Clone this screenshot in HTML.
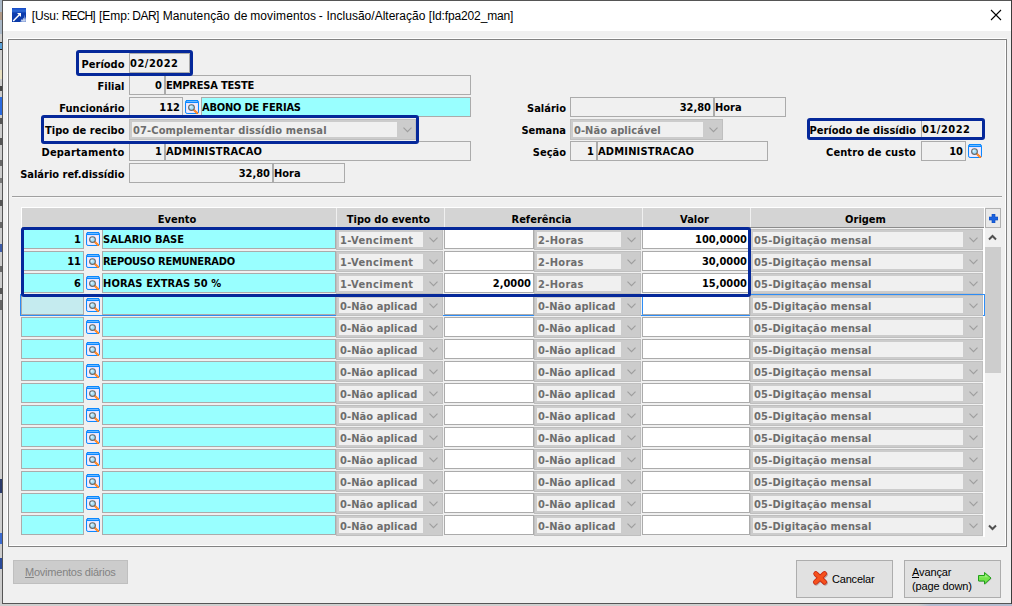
<!DOCTYPE html>
<html lang="pt-BR"><head><meta charset="utf-8"><title>Manutenção de movimentos</title>
<style>
*{box-sizing:border-box}
html,body{margin:0;padding:0}
body{width:1012px;height:606px;position:relative;overflow:hidden;background:#cdcdcd;font-family:'DejaVu Sans Condensed','Liberation Sans',sans-serif;font-size:11px;font-weight:bold;color:#000}
div,span{position:absolute;white-space:nowrap}
.win{left:2px;top:0;width:1010px;height:604px;background:#f0f0f0;border:1px solid #555}
.tb{left:3px;top:1px;width:1008px;height:30px;background:#fff}
.title{left:0;top:9px;font:normal 12px/15px 'Liberation Sans',sans-serif}
.pw{left:7px;top:38px;width:999px;height:508px;border:1px solid #fff}
.pg{left:8px;top:39px;width:999px;height:508px;border:1px solid #828282}
.l{left:0;width:124px;text-align:right;height:20px;line-height:20px;margin-top:2px}
.f{height:20px;border:1px solid #ababab;background:#f0f0f0;line-height:20px;padding:0 1px 0 0;overflow:hidden}
.r{text-align:right;padding-right:2px}
.cy{background:#99ffff}
.wh{background:#fff}
.cb{height:21px;background:#cccccc;border:1px solid #bfbfbf;color:#6d6d6d;line-height:21px}
.cb i{position:absolute;left:2px;top:2px;bottom:2px;right:19px;background:#f0f0f0}
.cb b{position:absolute;left:3px;top:0;font-weight:bold}
.cb svg{position:absolute;right:4px;top:6.8px}
.cb2 i{right:18px}.cb2 svg{right:3px}
.hl{border:3px solid #05289a;border-radius:3px}
.ic{width:14px;height:14px}
.hd{top:208px;height:19px;background:#d4d4d4;text-align:center;line-height:23px;overflow:hidden}
.btn{background:#e1e1e1;border:1px solid #adadad;font:normal 11px/14px 'Liberation Sans',sans-serif}
.act{background:#c5ebef}.actv{border-left-color:#2d8cf5}
</style></head>
<body>
<div class="win"></div><div class="tb"></div>
<div style="left:0;top:0;width:2px;height:34px;background:#a9b7c6"></div>
<div style="left:0;top:12px;width:2px;height:8px;background:#b09a88"></div>
<div style="left:0;top:42px;width:2px;height:1px;background:#222"></div>
<div style="left:0;top:43px;width:2px;height:6px;background:#5aa0d8"></div>
<div style="left:0;top:49px;width:2px;height:1px;background:#222"></div>
<div style="left:0;top:70px;width:2px;height:9px;background:#e8e0c0"></div>
<div style="left:0;top:86px;width:2px;height:5px;background:#444"></div>
<div style="left:0;top:97px;width:2px;height:18px;background:#2a6ae0"></div>
<div style="left:0;top:118px;width:2px;height:6px;background:#555"></div>
<div style="left:0;top:138px;width:2px;height:7px;background:#555"></div>
<div style="left:0;top:160px;width:2px;height:6px;background:#666"></div>
<div style="left:0;top:178px;width:2px;height:5px;background:#777"></div>
<div style="left:0;top:200px;width:2px;height:6px;background:#555"></div>
<div style="left:0;top:222px;width:2px;height:6px;background:#666"></div>
<div style="left:0;top:244px;width:2px;height:8px;background:#3a5aa8"></div>
<div style="left:0;top:266px;width:2px;height:6px;background:#666"></div>
<div style="left:0;top:288px;width:2px;height:6px;background:#555"></div>
<div style="left:0;top:300px;width:2px;height:10px;background:#666"></div>
<div style="left:0;top:479px;width:2px;height:14px;background:#2a3a6a"></div>
<div style="left:0;top:533px;width:2px;height:11px;background:#3a6ad0"></div>
<div style="left:0;top:558px;width:2px;height:11px;background:#2a4a9a"></div>
<div style="left:0;top:604px;width:1012px;height:2px;background:linear-gradient(90deg,#cfcfcf 0,#cfcfcf 918px,#b4bcd0 930px,#b4bcd0 100%)"></div>
<svg style="position:absolute;left:12px;top:8px" width="14" height="14" viewBox="0 0 14 14"><defs><linearGradient id="tg" x1="0" y1="0" x2="0" y2="1"><stop offset="0" stop-color="#1448c4"/><stop offset="0.22" stop-color="#2f6cd8"/><stop offset="0.36" stop-color="#0c3cae"/><stop offset="1" stop-color="#0a3aa8"/></linearGradient></defs><rect width="14" height="14" fill="url(#tg)"/><path d="M1.2 13 L7.4 6.8" stroke="#fff" stroke-width="1.5" fill="none"/><path d="M5 5 L9 5 L9 9 Z" fill="#fff"/><path d="M8.3 13.6 L9.6 11 L10.4 12 L11.2 9.6 L11.8 10.6 L12.8 6.6 L13.2 9.8 L14 9.4 L14 14 L8.6 14 Z" fill="#c4d6f4" opacity="0.55"/><path d="M9 12.6 l1-1.4 l0.8 1 l1.2-2.4 l0.6 1.8 l1-0.6 l0 2.6 l-3.6 0 z" fill="#fff" opacity="0.6"/></svg>
<div class="title"><span style="left:31.7px;letter-spacing:-0.125px">[Usu:</span> <span style="left:61.8px;letter-spacing:-0.9px">RECH]</span> <span style="left:98.9px;letter-spacing:-0.025px">[Emp:</span> <span style="left:132.3px;letter-spacing:-0.533px">DAR]</span> <span style="left:162.7px;letter-spacing:0.111px">Manutenção</span> <span style="left:233.9px;letter-spacing:0.1px">de</span> <span style="left:250.2px;letter-spacing:0.133px">movimentos</span> <span style="left:318.7px;letter-spacing:0px">-</span> <span style="left:326.5px;letter-spacing:0.012px">Inclusão/Alteração</span> <span style="left:428.7px;letter-spacing:-0.143px">[Id:fpa202_man]</span></div>
<svg style="position:absolute;left:990px;top:9px" width="12" height="12" viewBox="0 0 12 12"><path d="M1 1 L11 11 M11 1 L1 11" stroke="#000" stroke-width="1.1" fill="none"/></svg>
<div class="pw"></div><div class="pg"></div>
<div class="l" style="top:53px;width:124.5px">Período</div>
<div class="f " style="left:129px;top:53px;width:61px"><span style="position:static;letter-spacing:0.5px">02/2022</span></div>
<div class="l" style="top:75px;width:124.5px">Filial</div>
<div class="f r" style="left:129px;top:75px;width:36px">0</div>
<div class="f " style="left:165px;top:75px;width:306px"><span style="position:static;letter-spacing:-0.2px">EMPRESA TESTE</span></div>
<div class="l" style="top:97px;width:124.5px">Funcionário</div>
<div class="f r" style="left:129px;top:97px;width:54px">112</div>
<svg class="ic" style="position:absolute;left:185px;top:100px" width="14" height="14" viewBox="0 0 14 14"><rect x="0.5" y="0.5" width="13" height="13" rx="1.6" fill="#e9e3fd" stroke="#0a88ff"/><rect x="1" y="0" width="12" height="3" fill="#0a88ff"/><rect x="1.6" y="1" width="10.8" height="1" fill="#6cb8ff"/><rect x="2" y="4" width="10" height="8" fill="#f1edff"/><line x1="9.2" y1="10.2" x2="12.1" y2="13" stroke="#ff7a1c" stroke-width="2.1" stroke-linecap="round"/><line x1="9.6" y1="10.6" x2="12.1" y2="13" stroke="#ffd23c" stroke-width="1" stroke-dasharray="0.9 0.9"/><circle cx="6.5" cy="7.55" r="2.85" fill="#a6e0fa" stroke="#686868" stroke-width="1.15"/><circle cx="5.7" cy="6.8" r="1.1" fill="#e4f6ff" opacity="0.8"/></svg>
<div class="f cy" style="left:201px;top:97px;width:270px"><span style="position:static;letter-spacing:-0.2px">ABONO DE FERIAS</span></div>
<div class="l" style="top:119px;width:124.5px">Tipo de recibo</div>
<div class="cb cb2" style="left:129px;top:119px;width:287px"><i></i><b style="letter-spacing:0.13px">07-Complementar dissídio mensal</b><svg width="9" height="6" viewBox="0 0 9 6"><path d="M0.5 0.7 L4.5 4.7 L8.5 0.7" fill="none" stroke="#9e9e9e" stroke-width="1.15"/></svg></div>
<div class="l" style="top:141px;width:124.5px"><span style="position:static;letter-spacing:0.2px">Departamento</span></div>
<div class="f r" style="left:129px;top:141px;width:36px">1</div>
<div class="f " style="left:165px;top:141px;width:306px"><span style="position:static;letter-spacing:0.18px">ADMINISTRACAO</span></div>
<div class="l" style="top:163px;width:124.5px">Salário ref.dissídio</div>
<div class="f r" style="left:129px;top:163px;width:144px">32,80</div>
<div class="f " style="left:273px;top:163px;width:72px">Hora</div>
<div class="l" style="top:97px;width:566px">Salário</div>
<div class="f r" style="left:570px;top:97px;width:144px">32,80</div>
<div class="f " style="left:714px;top:97px;width:72px">Hora</div>
<div class="l" style="top:119px;width:566px">Semana</div>
<div class="cb " style="left:570px;top:119px;width:153px"><i></i><b style="letter-spacing:0.05px">0-Não aplicável</b><svg width="9" height="6" viewBox="0 0 9 6"><path d="M0.5 0.7 L4.5 4.7 L8.5 0.7" fill="none" stroke="#9e9e9e" stroke-width="1.15"/></svg></div>
<div class="l" style="top:141px;width:566px">Seção</div>
<div class="f r" style="left:570px;top:141px;width:27px">1</div>
<div class="f " style="left:597px;top:141px;width:171px"><span style="position:static;letter-spacing:0.18px">ADMINISTRACAO</span></div>
<div class="l" style="top:119px;width:916px">Período de dissídio</div>
<div class="f " style="left:921px;top:119px;width:63px"><span style="position:static;letter-spacing:0.5px">01/2022</span></div>
<div class="l" style="top:141px;width:916px"><span style="position:static;letter-spacing:0.1px">Centro de custo</span></div>
<div class="f r" style="left:921px;top:141px;width:45px">10</div>
<svg class="ic" style="position:absolute;left:968px;top:144px" width="14" height="14" viewBox="0 0 14 14"><rect x="0.5" y="0.5" width="13" height="13" rx="1.6" fill="#e9e3fd" stroke="#0a88ff"/><rect x="1" y="0" width="12" height="3" fill="#0a88ff"/><rect x="1.6" y="1" width="10.8" height="1" fill="#6cb8ff"/><rect x="2" y="4" width="10" height="8" fill="#f1edff"/><line x1="9.2" y1="10.2" x2="12.1" y2="13" stroke="#ff7a1c" stroke-width="2.1" stroke-linecap="round"/><line x1="9.6" y1="10.6" x2="12.1" y2="13" stroke="#ffd23c" stroke-width="1" stroke-dasharray="0.9 0.9"/><circle cx="6.5" cy="7.55" r="2.85" fill="#a6e0fa" stroke="#686868" stroke-width="1.15"/><circle cx="5.7" cy="6.8" r="1.1" fill="#e4f6ff" opacity="0.8"/></svg>
<div class="hl" style="left:76px;top:50px;width:117px;height:26px"></div>
<div class="hl" style="left:41px;top:115px;width:378px;height:29px"></div>
<div class="hl" style="left:807px;top:118px;width:178px;height:22px"></div>
<div style="left:12px;top:196px;width:990px;height:1px;background:#a0a0a0"></div>
<div style="left:12px;top:197px;width:990px;height:1px;background:#f8f8f8"></div>
<div style="left:21px;top:207px;width:964px;height:330px;background:#f0f0f0;border-top:1px solid #fff"></div>
<div style="left:983px;top:207px;width:2px;height:330px;background:#fff"></div>
<div style="left:21px;top:207px;width:1px;height:21px;background:#fff"></div>
<div style="left:22px;top:227px;width:962px;height:1px;background:#8c8c8c"></div>
<div class="hd" style="left:22px;width:314px"><span style="position:relative;left:-2px">Evento</span></div>
<div class="hd" style="left:337px;width:107px"><span style="position:relative;left:-2px">Tipo do evento</span></div>
<div class="hd" style="left:445px;width:197px"><span style="position:relative;left:-2px">Referência</span></div>
<div class="hd" style="left:643px;width:107px"><span style="position:relative;left:-2px">Valor</span></div>
<div class="hd" style="left:751px;width:233px"><span style="position:relative;left:-2px">Origem</span></div>
<div style="left:985px;top:208px;width:16px;height:20px;background:#e9e9e9;border:1px solid #b2b2b2"></div>
<svg style="position:absolute;left:989px;top:214px" width="9" height="9" viewBox="0 0 9 9"><path d="M3 0h3v3h3v3h-3v3h-3v-3h-3v-3h3z" fill="#1b63e0" stroke="#0a48b8" stroke-width="0.6"/></svg>
<div style="left:985px;top:247px;width:16px;height:126px;background:#cdcdcd"></div>
<svg style="position:absolute;left:988px;top:234px" width="9" height="7" viewBox="0 0 9 7"><path d="M1 5.5 L4.5 2 L8 5.5" fill="none" stroke="#505050" stroke-width="2"/></svg>
<svg style="position:absolute;left:988px;top:524px" width="9" height="7" viewBox="0 0 9 7"><path d="M1 1.5 L4.5 5 L8 1.5" fill="none" stroke="#505050" stroke-width="2"/></svg>
<div class="f cy r" style="left:21px;top:229px;width:63px">1</div>
<svg class="ic" style="position:absolute;left:86px;top:232px" width="14" height="14" viewBox="0 0 14 14"><rect x="0.5" y="0.5" width="13" height="13" rx="1.6" fill="#e9e3fd" stroke="#0a88ff"/><rect x="1" y="0" width="12" height="3" fill="#0a88ff"/><rect x="1.6" y="1" width="10.8" height="1" fill="#6cb8ff"/><rect x="2" y="4" width="10" height="8" fill="#f1edff"/><line x1="9.2" y1="10.2" x2="12.1" y2="13" stroke="#ff7a1c" stroke-width="2.1" stroke-linecap="round"/><line x1="9.6" y1="10.6" x2="12.1" y2="13" stroke="#ffd23c" stroke-width="1" stroke-dasharray="0.9 0.9"/><circle cx="6.5" cy="7.55" r="2.85" fill="#a6e0fa" stroke="#686868" stroke-width="1.15"/><circle cx="5.7" cy="6.8" r="1.1" fill="#e4f6ff" opacity="0.8"/></svg>
<div class="f cy" style="left:102px;top:229px;width:234px">SALARIO BASE</div>
<div class="cb " style="left:336px;top:229px;width:107px"><i></i><b style="letter-spacing:0.4px">1-Venciment</b><svg width="9" height="6" viewBox="0 0 9 6"><path d="M0.5 0.7 L4.5 4.7 L8.5 0.7" fill="none" stroke="#9e9e9e" stroke-width="1.15"/></svg></div>
<div class="f wh r" style="left:444px;top:229px;width:90px"></div>
<div class="cb " style="left:534px;top:229px;width:107px"><i></i><b style="letter-spacing:0.33px">2-Horas</b><svg width="9" height="6" viewBox="0 0 9 6"><path d="M0.5 0.7 L4.5 4.7 L8.5 0.7" fill="none" stroke="#9e9e9e" stroke-width="1.15"/></svg></div>
<div class="f wh r" style="left:642px;top:229px;width:108px">100,0000</div>
<div class="cb " style="left:750px;top:229px;width:233px"><i></i><b style="letter-spacing:0.18px">05-Digitação mensal</b><svg width="9" height="6" viewBox="0 0 9 6"><path d="M0.5 0.7 L4.5 4.7 L8.5 0.7" fill="none" stroke="#9e9e9e" stroke-width="1.15"/></svg></div>
<div class="f cy r" style="left:21px;top:251px;width:63px">11</div>
<svg class="ic" style="position:absolute;left:86px;top:254px" width="14" height="14" viewBox="0 0 14 14"><rect x="0.5" y="0.5" width="13" height="13" rx="1.6" fill="#e9e3fd" stroke="#0a88ff"/><rect x="1" y="0" width="12" height="3" fill="#0a88ff"/><rect x="1.6" y="1" width="10.8" height="1" fill="#6cb8ff"/><rect x="2" y="4" width="10" height="8" fill="#f1edff"/><line x1="9.2" y1="10.2" x2="12.1" y2="13" stroke="#ff7a1c" stroke-width="2.1" stroke-linecap="round"/><line x1="9.6" y1="10.6" x2="12.1" y2="13" stroke="#ffd23c" stroke-width="1" stroke-dasharray="0.9 0.9"/><circle cx="6.5" cy="7.55" r="2.85" fill="#a6e0fa" stroke="#686868" stroke-width="1.15"/><circle cx="5.7" cy="6.8" r="1.1" fill="#e4f6ff" opacity="0.8"/></svg>
<div class="f cy" style="left:102px;top:251px;width:234px"><span style="position:static;letter-spacing:-0.25px">REPOUSO REMUNERADO</span></div>
<div class="cb " style="left:336px;top:251px;width:107px"><i></i><b style="letter-spacing:0.4px">1-Venciment</b><svg width="9" height="6" viewBox="0 0 9 6"><path d="M0.5 0.7 L4.5 4.7 L8.5 0.7" fill="none" stroke="#9e9e9e" stroke-width="1.15"/></svg></div>
<div class="f wh r" style="left:444px;top:251px;width:90px"></div>
<div class="cb " style="left:534px;top:251px;width:107px"><i></i><b style="letter-spacing:0.33px">2-Horas</b><svg width="9" height="6" viewBox="0 0 9 6"><path d="M0.5 0.7 L4.5 4.7 L8.5 0.7" fill="none" stroke="#9e9e9e" stroke-width="1.15"/></svg></div>
<div class="f wh r" style="left:642px;top:251px;width:108px">30,0000</div>
<div class="cb " style="left:750px;top:251px;width:233px"><i></i><b style="letter-spacing:0.18px">05-Digitação mensal</b><svg width="9" height="6" viewBox="0 0 9 6"><path d="M0.5 0.7 L4.5 4.7 L8.5 0.7" fill="none" stroke="#9e9e9e" stroke-width="1.15"/></svg></div>
<div class="f cy r" style="left:21px;top:273px;width:63px">6</div>
<svg class="ic" style="position:absolute;left:86px;top:276px" width="14" height="14" viewBox="0 0 14 14"><rect x="0.5" y="0.5" width="13" height="13" rx="1.6" fill="#e9e3fd" stroke="#0a88ff"/><rect x="1" y="0" width="12" height="3" fill="#0a88ff"/><rect x="1.6" y="1" width="10.8" height="1" fill="#6cb8ff"/><rect x="2" y="4" width="10" height="8" fill="#f1edff"/><line x1="9.2" y1="10.2" x2="12.1" y2="13" stroke="#ff7a1c" stroke-width="2.1" stroke-linecap="round"/><line x1="9.6" y1="10.6" x2="12.1" y2="13" stroke="#ffd23c" stroke-width="1" stroke-dasharray="0.9 0.9"/><circle cx="6.5" cy="7.55" r="2.85" fill="#a6e0fa" stroke="#686868" stroke-width="1.15"/><circle cx="5.7" cy="6.8" r="1.1" fill="#e4f6ff" opacity="0.8"/></svg>
<div class="f cy" style="left:102px;top:273px;width:234px"><span style="position:static;letter-spacing:0.1px">HORAS EXTRAS 50 %</span></div>
<div class="cb " style="left:336px;top:273px;width:107px"><i></i><b style="letter-spacing:0.4px">1-Venciment</b><svg width="9" height="6" viewBox="0 0 9 6"><path d="M0.5 0.7 L4.5 4.7 L8.5 0.7" fill="none" stroke="#9e9e9e" stroke-width="1.15"/></svg></div>
<div class="f wh r" style="left:444px;top:273px;width:90px">2,0000</div>
<div class="cb " style="left:534px;top:273px;width:107px"><i></i><b style="letter-spacing:0.33px">2-Horas</b><svg width="9" height="6" viewBox="0 0 9 6"><path d="M0.5 0.7 L4.5 4.7 L8.5 0.7" fill="none" stroke="#9e9e9e" stroke-width="1.15"/></svg></div>
<div class="f wh r" style="left:642px;top:273px;width:108px">15,0000</div>
<div class="cb " style="left:750px;top:273px;width:233px"><i></i><b style="letter-spacing:0.18px">05-Digitação mensal</b><svg width="9" height="6" viewBox="0 0 9 6"><path d="M0.5 0.7 L4.5 4.7 L8.5 0.7" fill="none" stroke="#9e9e9e" stroke-width="1.15"/></svg></div>
<div style="left:20px;top:294px;width:965px;height:22px;border:1px solid #2d8cf5"></div>
<div class="f cy r act" style="left:21px;top:295px;width:63px"></div>
<svg class="ic" style="position:absolute;left:86px;top:298px" width="14" height="14" viewBox="0 0 14 14"><rect x="0.5" y="0.5" width="13" height="13" rx="1.6" fill="#e9e3fd" stroke="#0a88ff"/><rect x="1" y="0" width="12" height="3" fill="#0a88ff"/><rect x="1.6" y="1" width="10.8" height="1" fill="#6cb8ff"/><rect x="2" y="4" width="10" height="8" fill="#f1edff"/><line x1="9.2" y1="10.2" x2="12.1" y2="13" stroke="#ff7a1c" stroke-width="2.1" stroke-linecap="round"/><line x1="9.6" y1="10.6" x2="12.1" y2="13" stroke="#ffd23c" stroke-width="1" stroke-dasharray="0.9 0.9"/><circle cx="6.5" cy="7.55" r="2.85" fill="#a6e0fa" stroke="#686868" stroke-width="1.15"/><circle cx="5.7" cy="6.8" r="1.1" fill="#e4f6ff" opacity="0.8"/></svg>
<div class="f cy" style="left:102px;top:295px;width:234px"></div>
<div class="cb " style="left:336px;top:295px;width:107px"><i></i><b style="letter-spacing:0.08px">0-Não aplicad</b><svg width="9" height="6" viewBox="0 0 9 6"><path d="M0.5 0.7 L4.5 4.7 L8.5 0.7" fill="none" stroke="#9e9e9e" stroke-width="1.15"/></svg></div>
<div class="f wh r" style="left:444px;top:295px;width:90px"></div>
<div class="cb " style="left:534px;top:295px;width:107px"><i></i><b style="letter-spacing:0.08px">0-Não aplicad</b><svg width="9" height="6" viewBox="0 0 9 6"><path d="M0.5 0.7 L4.5 4.7 L8.5 0.7" fill="none" stroke="#9e9e9e" stroke-width="1.15"/></svg></div>
<div class="f wh r actv" style="left:642px;top:295px;width:108px"></div>
<div class="cb " style="left:750px;top:295px;width:233px"><i></i><b style="letter-spacing:0.18px">05-Digitação mensal</b><svg width="9" height="6" viewBox="0 0 9 6"><path d="M0.5 0.7 L4.5 4.7 L8.5 0.7" fill="none" stroke="#9e9e9e" stroke-width="1.15"/></svg></div>
<div class="f cy r" style="left:21px;top:317px;width:63px"></div>
<svg class="ic" style="position:absolute;left:86px;top:320px" width="14" height="14" viewBox="0 0 14 14"><rect x="0.5" y="0.5" width="13" height="13" rx="1.6" fill="#e9e3fd" stroke="#0a88ff"/><rect x="1" y="0" width="12" height="3" fill="#0a88ff"/><rect x="1.6" y="1" width="10.8" height="1" fill="#6cb8ff"/><rect x="2" y="4" width="10" height="8" fill="#f1edff"/><line x1="9.2" y1="10.2" x2="12.1" y2="13" stroke="#ff7a1c" stroke-width="2.1" stroke-linecap="round"/><line x1="9.6" y1="10.6" x2="12.1" y2="13" stroke="#ffd23c" stroke-width="1" stroke-dasharray="0.9 0.9"/><circle cx="6.5" cy="7.55" r="2.85" fill="#a6e0fa" stroke="#686868" stroke-width="1.15"/><circle cx="5.7" cy="6.8" r="1.1" fill="#e4f6ff" opacity="0.8"/></svg>
<div class="f cy" style="left:102px;top:317px;width:234px"></div>
<div class="cb " style="left:336px;top:317px;width:107px"><i></i><b style="letter-spacing:0.08px">0-Não aplicad</b><svg width="9" height="6" viewBox="0 0 9 6"><path d="M0.5 0.7 L4.5 4.7 L8.5 0.7" fill="none" stroke="#9e9e9e" stroke-width="1.15"/></svg></div>
<div class="f wh r" style="left:444px;top:317px;width:90px"></div>
<div class="cb " style="left:534px;top:317px;width:107px"><i></i><b style="letter-spacing:0.08px">0-Não aplicad</b><svg width="9" height="6" viewBox="0 0 9 6"><path d="M0.5 0.7 L4.5 4.7 L8.5 0.7" fill="none" stroke="#9e9e9e" stroke-width="1.15"/></svg></div>
<div class="f wh r" style="left:642px;top:317px;width:108px"></div>
<div class="cb " style="left:750px;top:317px;width:233px"><i></i><b style="letter-spacing:0.18px">05-Digitação mensal</b><svg width="9" height="6" viewBox="0 0 9 6"><path d="M0.5 0.7 L4.5 4.7 L8.5 0.7" fill="none" stroke="#9e9e9e" stroke-width="1.15"/></svg></div>
<div class="f cy r" style="left:21px;top:339px;width:63px"></div>
<svg class="ic" style="position:absolute;left:86px;top:342px" width="14" height="14" viewBox="0 0 14 14"><rect x="0.5" y="0.5" width="13" height="13" rx="1.6" fill="#e9e3fd" stroke="#0a88ff"/><rect x="1" y="0" width="12" height="3" fill="#0a88ff"/><rect x="1.6" y="1" width="10.8" height="1" fill="#6cb8ff"/><rect x="2" y="4" width="10" height="8" fill="#f1edff"/><line x1="9.2" y1="10.2" x2="12.1" y2="13" stroke="#ff7a1c" stroke-width="2.1" stroke-linecap="round"/><line x1="9.6" y1="10.6" x2="12.1" y2="13" stroke="#ffd23c" stroke-width="1" stroke-dasharray="0.9 0.9"/><circle cx="6.5" cy="7.55" r="2.85" fill="#a6e0fa" stroke="#686868" stroke-width="1.15"/><circle cx="5.7" cy="6.8" r="1.1" fill="#e4f6ff" opacity="0.8"/></svg>
<div class="f cy" style="left:102px;top:339px;width:234px"></div>
<div class="cb " style="left:336px;top:339px;width:107px"><i></i><b style="letter-spacing:0.08px">0-Não aplicad</b><svg width="9" height="6" viewBox="0 0 9 6"><path d="M0.5 0.7 L4.5 4.7 L8.5 0.7" fill="none" stroke="#9e9e9e" stroke-width="1.15"/></svg></div>
<div class="f wh r" style="left:444px;top:339px;width:90px"></div>
<div class="cb " style="left:534px;top:339px;width:107px"><i></i><b style="letter-spacing:0.08px">0-Não aplicad</b><svg width="9" height="6" viewBox="0 0 9 6"><path d="M0.5 0.7 L4.5 4.7 L8.5 0.7" fill="none" stroke="#9e9e9e" stroke-width="1.15"/></svg></div>
<div class="f wh r" style="left:642px;top:339px;width:108px"></div>
<div class="cb " style="left:750px;top:339px;width:233px"><i></i><b style="letter-spacing:0.18px">05-Digitação mensal</b><svg width="9" height="6" viewBox="0 0 9 6"><path d="M0.5 0.7 L4.5 4.7 L8.5 0.7" fill="none" stroke="#9e9e9e" stroke-width="1.15"/></svg></div>
<div class="f cy r" style="left:21px;top:361px;width:63px"></div>
<svg class="ic" style="position:absolute;left:86px;top:364px" width="14" height="14" viewBox="0 0 14 14"><rect x="0.5" y="0.5" width="13" height="13" rx="1.6" fill="#e9e3fd" stroke="#0a88ff"/><rect x="1" y="0" width="12" height="3" fill="#0a88ff"/><rect x="1.6" y="1" width="10.8" height="1" fill="#6cb8ff"/><rect x="2" y="4" width="10" height="8" fill="#f1edff"/><line x1="9.2" y1="10.2" x2="12.1" y2="13" stroke="#ff7a1c" stroke-width="2.1" stroke-linecap="round"/><line x1="9.6" y1="10.6" x2="12.1" y2="13" stroke="#ffd23c" stroke-width="1" stroke-dasharray="0.9 0.9"/><circle cx="6.5" cy="7.55" r="2.85" fill="#a6e0fa" stroke="#686868" stroke-width="1.15"/><circle cx="5.7" cy="6.8" r="1.1" fill="#e4f6ff" opacity="0.8"/></svg>
<div class="f cy" style="left:102px;top:361px;width:234px"></div>
<div class="cb " style="left:336px;top:361px;width:107px"><i></i><b style="letter-spacing:0.08px">0-Não aplicad</b><svg width="9" height="6" viewBox="0 0 9 6"><path d="M0.5 0.7 L4.5 4.7 L8.5 0.7" fill="none" stroke="#9e9e9e" stroke-width="1.15"/></svg></div>
<div class="f wh r" style="left:444px;top:361px;width:90px"></div>
<div class="cb " style="left:534px;top:361px;width:107px"><i></i><b style="letter-spacing:0.08px">0-Não aplicad</b><svg width="9" height="6" viewBox="0 0 9 6"><path d="M0.5 0.7 L4.5 4.7 L8.5 0.7" fill="none" stroke="#9e9e9e" stroke-width="1.15"/></svg></div>
<div class="f wh r" style="left:642px;top:361px;width:108px"></div>
<div class="cb " style="left:750px;top:361px;width:233px"><i></i><b style="letter-spacing:0.18px">05-Digitação mensal</b><svg width="9" height="6" viewBox="0 0 9 6"><path d="M0.5 0.7 L4.5 4.7 L8.5 0.7" fill="none" stroke="#9e9e9e" stroke-width="1.15"/></svg></div>
<div class="f cy r" style="left:21px;top:383px;width:63px"></div>
<svg class="ic" style="position:absolute;left:86px;top:386px" width="14" height="14" viewBox="0 0 14 14"><rect x="0.5" y="0.5" width="13" height="13" rx="1.6" fill="#e9e3fd" stroke="#0a88ff"/><rect x="1" y="0" width="12" height="3" fill="#0a88ff"/><rect x="1.6" y="1" width="10.8" height="1" fill="#6cb8ff"/><rect x="2" y="4" width="10" height="8" fill="#f1edff"/><line x1="9.2" y1="10.2" x2="12.1" y2="13" stroke="#ff7a1c" stroke-width="2.1" stroke-linecap="round"/><line x1="9.6" y1="10.6" x2="12.1" y2="13" stroke="#ffd23c" stroke-width="1" stroke-dasharray="0.9 0.9"/><circle cx="6.5" cy="7.55" r="2.85" fill="#a6e0fa" stroke="#686868" stroke-width="1.15"/><circle cx="5.7" cy="6.8" r="1.1" fill="#e4f6ff" opacity="0.8"/></svg>
<div class="f cy" style="left:102px;top:383px;width:234px"></div>
<div class="cb " style="left:336px;top:383px;width:107px"><i></i><b style="letter-spacing:0.08px">0-Não aplicad</b><svg width="9" height="6" viewBox="0 0 9 6"><path d="M0.5 0.7 L4.5 4.7 L8.5 0.7" fill="none" stroke="#9e9e9e" stroke-width="1.15"/></svg></div>
<div class="f wh r" style="left:444px;top:383px;width:90px"></div>
<div class="cb " style="left:534px;top:383px;width:107px"><i></i><b style="letter-spacing:0.08px">0-Não aplicad</b><svg width="9" height="6" viewBox="0 0 9 6"><path d="M0.5 0.7 L4.5 4.7 L8.5 0.7" fill="none" stroke="#9e9e9e" stroke-width="1.15"/></svg></div>
<div class="f wh r" style="left:642px;top:383px;width:108px"></div>
<div class="cb " style="left:750px;top:383px;width:233px"><i></i><b style="letter-spacing:0.18px">05-Digitação mensal</b><svg width="9" height="6" viewBox="0 0 9 6"><path d="M0.5 0.7 L4.5 4.7 L8.5 0.7" fill="none" stroke="#9e9e9e" stroke-width="1.15"/></svg></div>
<div class="f cy r" style="left:21px;top:405px;width:63px"></div>
<svg class="ic" style="position:absolute;left:86px;top:408px" width="14" height="14" viewBox="0 0 14 14"><rect x="0.5" y="0.5" width="13" height="13" rx="1.6" fill="#e9e3fd" stroke="#0a88ff"/><rect x="1" y="0" width="12" height="3" fill="#0a88ff"/><rect x="1.6" y="1" width="10.8" height="1" fill="#6cb8ff"/><rect x="2" y="4" width="10" height="8" fill="#f1edff"/><line x1="9.2" y1="10.2" x2="12.1" y2="13" stroke="#ff7a1c" stroke-width="2.1" stroke-linecap="round"/><line x1="9.6" y1="10.6" x2="12.1" y2="13" stroke="#ffd23c" stroke-width="1" stroke-dasharray="0.9 0.9"/><circle cx="6.5" cy="7.55" r="2.85" fill="#a6e0fa" stroke="#686868" stroke-width="1.15"/><circle cx="5.7" cy="6.8" r="1.1" fill="#e4f6ff" opacity="0.8"/></svg>
<div class="f cy" style="left:102px;top:405px;width:234px"></div>
<div class="cb " style="left:336px;top:405px;width:107px"><i></i><b style="letter-spacing:0.08px">0-Não aplicad</b><svg width="9" height="6" viewBox="0 0 9 6"><path d="M0.5 0.7 L4.5 4.7 L8.5 0.7" fill="none" stroke="#9e9e9e" stroke-width="1.15"/></svg></div>
<div class="f wh r" style="left:444px;top:405px;width:90px"></div>
<div class="cb " style="left:534px;top:405px;width:107px"><i></i><b style="letter-spacing:0.08px">0-Não aplicad</b><svg width="9" height="6" viewBox="0 0 9 6"><path d="M0.5 0.7 L4.5 4.7 L8.5 0.7" fill="none" stroke="#9e9e9e" stroke-width="1.15"/></svg></div>
<div class="f wh r" style="left:642px;top:405px;width:108px"></div>
<div class="cb " style="left:750px;top:405px;width:233px"><i></i><b style="letter-spacing:0.18px">05-Digitação mensal</b><svg width="9" height="6" viewBox="0 0 9 6"><path d="M0.5 0.7 L4.5 4.7 L8.5 0.7" fill="none" stroke="#9e9e9e" stroke-width="1.15"/></svg></div>
<div class="f cy r" style="left:21px;top:427px;width:63px"></div>
<svg class="ic" style="position:absolute;left:86px;top:430px" width="14" height="14" viewBox="0 0 14 14"><rect x="0.5" y="0.5" width="13" height="13" rx="1.6" fill="#e9e3fd" stroke="#0a88ff"/><rect x="1" y="0" width="12" height="3" fill="#0a88ff"/><rect x="1.6" y="1" width="10.8" height="1" fill="#6cb8ff"/><rect x="2" y="4" width="10" height="8" fill="#f1edff"/><line x1="9.2" y1="10.2" x2="12.1" y2="13" stroke="#ff7a1c" stroke-width="2.1" stroke-linecap="round"/><line x1="9.6" y1="10.6" x2="12.1" y2="13" stroke="#ffd23c" stroke-width="1" stroke-dasharray="0.9 0.9"/><circle cx="6.5" cy="7.55" r="2.85" fill="#a6e0fa" stroke="#686868" stroke-width="1.15"/><circle cx="5.7" cy="6.8" r="1.1" fill="#e4f6ff" opacity="0.8"/></svg>
<div class="f cy" style="left:102px;top:427px;width:234px"></div>
<div class="cb " style="left:336px;top:427px;width:107px"><i></i><b style="letter-spacing:0.08px">0-Não aplicad</b><svg width="9" height="6" viewBox="0 0 9 6"><path d="M0.5 0.7 L4.5 4.7 L8.5 0.7" fill="none" stroke="#9e9e9e" stroke-width="1.15"/></svg></div>
<div class="f wh r" style="left:444px;top:427px;width:90px"></div>
<div class="cb " style="left:534px;top:427px;width:107px"><i></i><b style="letter-spacing:0.08px">0-Não aplicad</b><svg width="9" height="6" viewBox="0 0 9 6"><path d="M0.5 0.7 L4.5 4.7 L8.5 0.7" fill="none" stroke="#9e9e9e" stroke-width="1.15"/></svg></div>
<div class="f wh r" style="left:642px;top:427px;width:108px"></div>
<div class="cb " style="left:750px;top:427px;width:233px"><i></i><b style="letter-spacing:0.18px">05-Digitação mensal</b><svg width="9" height="6" viewBox="0 0 9 6"><path d="M0.5 0.7 L4.5 4.7 L8.5 0.7" fill="none" stroke="#9e9e9e" stroke-width="1.15"/></svg></div>
<div class="f cy r" style="left:21px;top:449px;width:63px"></div>
<svg class="ic" style="position:absolute;left:86px;top:452px" width="14" height="14" viewBox="0 0 14 14"><rect x="0.5" y="0.5" width="13" height="13" rx="1.6" fill="#e9e3fd" stroke="#0a88ff"/><rect x="1" y="0" width="12" height="3" fill="#0a88ff"/><rect x="1.6" y="1" width="10.8" height="1" fill="#6cb8ff"/><rect x="2" y="4" width="10" height="8" fill="#f1edff"/><line x1="9.2" y1="10.2" x2="12.1" y2="13" stroke="#ff7a1c" stroke-width="2.1" stroke-linecap="round"/><line x1="9.6" y1="10.6" x2="12.1" y2="13" stroke="#ffd23c" stroke-width="1" stroke-dasharray="0.9 0.9"/><circle cx="6.5" cy="7.55" r="2.85" fill="#a6e0fa" stroke="#686868" stroke-width="1.15"/><circle cx="5.7" cy="6.8" r="1.1" fill="#e4f6ff" opacity="0.8"/></svg>
<div class="f cy" style="left:102px;top:449px;width:234px"></div>
<div class="cb " style="left:336px;top:449px;width:107px"><i></i><b style="letter-spacing:0.08px">0-Não aplicad</b><svg width="9" height="6" viewBox="0 0 9 6"><path d="M0.5 0.7 L4.5 4.7 L8.5 0.7" fill="none" stroke="#9e9e9e" stroke-width="1.15"/></svg></div>
<div class="f wh r" style="left:444px;top:449px;width:90px"></div>
<div class="cb " style="left:534px;top:449px;width:107px"><i></i><b style="letter-spacing:0.08px">0-Não aplicad</b><svg width="9" height="6" viewBox="0 0 9 6"><path d="M0.5 0.7 L4.5 4.7 L8.5 0.7" fill="none" stroke="#9e9e9e" stroke-width="1.15"/></svg></div>
<div class="f wh r" style="left:642px;top:449px;width:108px"></div>
<div class="cb " style="left:750px;top:449px;width:233px"><i></i><b style="letter-spacing:0.18px">05-Digitação mensal</b><svg width="9" height="6" viewBox="0 0 9 6"><path d="M0.5 0.7 L4.5 4.7 L8.5 0.7" fill="none" stroke="#9e9e9e" stroke-width="1.15"/></svg></div>
<div class="f cy r" style="left:21px;top:471px;width:63px"></div>
<svg class="ic" style="position:absolute;left:86px;top:474px" width="14" height="14" viewBox="0 0 14 14"><rect x="0.5" y="0.5" width="13" height="13" rx="1.6" fill="#e9e3fd" stroke="#0a88ff"/><rect x="1" y="0" width="12" height="3" fill="#0a88ff"/><rect x="1.6" y="1" width="10.8" height="1" fill="#6cb8ff"/><rect x="2" y="4" width="10" height="8" fill="#f1edff"/><line x1="9.2" y1="10.2" x2="12.1" y2="13" stroke="#ff7a1c" stroke-width="2.1" stroke-linecap="round"/><line x1="9.6" y1="10.6" x2="12.1" y2="13" stroke="#ffd23c" stroke-width="1" stroke-dasharray="0.9 0.9"/><circle cx="6.5" cy="7.55" r="2.85" fill="#a6e0fa" stroke="#686868" stroke-width="1.15"/><circle cx="5.7" cy="6.8" r="1.1" fill="#e4f6ff" opacity="0.8"/></svg>
<div class="f cy" style="left:102px;top:471px;width:234px"></div>
<div class="cb " style="left:336px;top:471px;width:107px"><i></i><b style="letter-spacing:0.08px">0-Não aplicad</b><svg width="9" height="6" viewBox="0 0 9 6"><path d="M0.5 0.7 L4.5 4.7 L8.5 0.7" fill="none" stroke="#9e9e9e" stroke-width="1.15"/></svg></div>
<div class="f wh r" style="left:444px;top:471px;width:90px"></div>
<div class="cb " style="left:534px;top:471px;width:107px"><i></i><b style="letter-spacing:0.08px">0-Não aplicad</b><svg width="9" height="6" viewBox="0 0 9 6"><path d="M0.5 0.7 L4.5 4.7 L8.5 0.7" fill="none" stroke="#9e9e9e" stroke-width="1.15"/></svg></div>
<div class="f wh r" style="left:642px;top:471px;width:108px"></div>
<div class="cb " style="left:750px;top:471px;width:233px"><i></i><b style="letter-spacing:0.18px">05-Digitação mensal</b><svg width="9" height="6" viewBox="0 0 9 6"><path d="M0.5 0.7 L4.5 4.7 L8.5 0.7" fill="none" stroke="#9e9e9e" stroke-width="1.15"/></svg></div>
<div class="f cy r" style="left:21px;top:493px;width:63px"></div>
<svg class="ic" style="position:absolute;left:86px;top:496px" width="14" height="14" viewBox="0 0 14 14"><rect x="0.5" y="0.5" width="13" height="13" rx="1.6" fill="#e9e3fd" stroke="#0a88ff"/><rect x="1" y="0" width="12" height="3" fill="#0a88ff"/><rect x="1.6" y="1" width="10.8" height="1" fill="#6cb8ff"/><rect x="2" y="4" width="10" height="8" fill="#f1edff"/><line x1="9.2" y1="10.2" x2="12.1" y2="13" stroke="#ff7a1c" stroke-width="2.1" stroke-linecap="round"/><line x1="9.6" y1="10.6" x2="12.1" y2="13" stroke="#ffd23c" stroke-width="1" stroke-dasharray="0.9 0.9"/><circle cx="6.5" cy="7.55" r="2.85" fill="#a6e0fa" stroke="#686868" stroke-width="1.15"/><circle cx="5.7" cy="6.8" r="1.1" fill="#e4f6ff" opacity="0.8"/></svg>
<div class="f cy" style="left:102px;top:493px;width:234px"></div>
<div class="cb " style="left:336px;top:493px;width:107px"><i></i><b style="letter-spacing:0.08px">0-Não aplicad</b><svg width="9" height="6" viewBox="0 0 9 6"><path d="M0.5 0.7 L4.5 4.7 L8.5 0.7" fill="none" stroke="#9e9e9e" stroke-width="1.15"/></svg></div>
<div class="f wh r" style="left:444px;top:493px;width:90px"></div>
<div class="cb " style="left:534px;top:493px;width:107px"><i></i><b style="letter-spacing:0.08px">0-Não aplicad</b><svg width="9" height="6" viewBox="0 0 9 6"><path d="M0.5 0.7 L4.5 4.7 L8.5 0.7" fill="none" stroke="#9e9e9e" stroke-width="1.15"/></svg></div>
<div class="f wh r" style="left:642px;top:493px;width:108px"></div>
<div class="cb " style="left:750px;top:493px;width:233px"><i></i><b style="letter-spacing:0.18px">05-Digitação mensal</b><svg width="9" height="6" viewBox="0 0 9 6"><path d="M0.5 0.7 L4.5 4.7 L8.5 0.7" fill="none" stroke="#9e9e9e" stroke-width="1.15"/></svg></div>
<div class="f cy r" style="left:21px;top:515px;width:63px"></div>
<svg class="ic" style="position:absolute;left:86px;top:518px" width="14" height="14" viewBox="0 0 14 14"><rect x="0.5" y="0.5" width="13" height="13" rx="1.6" fill="#e9e3fd" stroke="#0a88ff"/><rect x="1" y="0" width="12" height="3" fill="#0a88ff"/><rect x="1.6" y="1" width="10.8" height="1" fill="#6cb8ff"/><rect x="2" y="4" width="10" height="8" fill="#f1edff"/><line x1="9.2" y1="10.2" x2="12.1" y2="13" stroke="#ff7a1c" stroke-width="2.1" stroke-linecap="round"/><line x1="9.6" y1="10.6" x2="12.1" y2="13" stroke="#ffd23c" stroke-width="1" stroke-dasharray="0.9 0.9"/><circle cx="6.5" cy="7.55" r="2.85" fill="#a6e0fa" stroke="#686868" stroke-width="1.15"/><circle cx="5.7" cy="6.8" r="1.1" fill="#e4f6ff" opacity="0.8"/></svg>
<div class="f cy" style="left:102px;top:515px;width:234px"></div>
<div class="cb " style="left:336px;top:515px;width:107px"><i></i><b style="letter-spacing:0.08px">0-Não aplicad</b><svg width="9" height="6" viewBox="0 0 9 6"><path d="M0.5 0.7 L4.5 4.7 L8.5 0.7" fill="none" stroke="#9e9e9e" stroke-width="1.15"/></svg></div>
<div class="f wh r" style="left:444px;top:515px;width:90px"></div>
<div class="cb " style="left:534px;top:515px;width:107px"><i></i><b style="letter-spacing:0.08px">0-Não aplicad</b><svg width="9" height="6" viewBox="0 0 9 6"><path d="M0.5 0.7 L4.5 4.7 L8.5 0.7" fill="none" stroke="#9e9e9e" stroke-width="1.15"/></svg></div>
<div class="f wh r" style="left:642px;top:515px;width:108px"></div>
<div class="cb " style="left:750px;top:515px;width:233px"><i></i><b style="letter-spacing:0.18px">05-Digitação mensal</b><svg width="9" height="6" viewBox="0 0 9 6"><path d="M0.5 0.7 L4.5 4.7 L8.5 0.7" fill="none" stroke="#9e9e9e" stroke-width="1.15"/></svg></div>
<div class="hl" style="left:21px;top:227px;width:730px;height:70px"></div>
<div style="left:13px;top:560px;width:115px;height:24px;background:#cccccc;border:1px solid #bfbfbf;font:normal 11px/22px 'Liberation Sans',sans-serif;color:#838383;padding-left:11px;letter-spacing:-0.23px"><u>M</u>ovimentos diários</div>
<div class="btn" style="left:796px;top:560px;width:97px;height:38px"><span style="left:35px;top:11px;letter-spacing:-0.2px">Cancelar</span></div>
<svg style="position:absolute;left:811px;top:569px" width="19" height="19" viewBox="0 0 19 19"><path d="M4.8 4.7 L13.5 13.1 M13.5 4.7 L4.5 13.1" stroke="#5a1408" stroke-opacity="0.3" stroke-width="5.3" stroke-linecap="round" fill="none" transform="translate(0.7,0.8)"/><path d="M4.8 4.7 L13.5 13.1 M13.5 4.7 L4.5 13.1" stroke="#c8240e" stroke-width="5" stroke-linecap="round" fill="none"/><path d="M4.8 4.7 L13.5 13.1 M13.5 4.7 L4.5 13.1" stroke="#f5511d" stroke-width="3.5" stroke-linecap="round" fill="none"/></svg>
<div class="btn" style="left:904px;top:560px;width:97px;height:38px"><span style="left:7px;top:4px;letter-spacing:-0.12px"><u>A</u>vançar<br>(page down)</span></div>
<svg style="position:absolute;left:977px;top:571px" width="16" height="15" viewBox="0 0 16 15"><path d="M1.5 4.5 H7.5 V1.5 L14 7 L7.5 13 V10 H1.5 Z" fill="#000" opacity="0.25" transform="translate(0.7,0.8)"/><path d="M1.5 4.5 H7.5 V1.5 L14 7 L7.5 13 V10 H1.5 Z" fill="#74e44c" stroke="#22a01a" stroke-width="1"/><path d="M2.5 5.5 H8 V3.5 L11.5 6.3 H2.5Z" fill="#a4f585" opacity="0.8"/></svg>
<div style="left:1011px;top:0;width:1px;height:604px;background:#3c3c3c"></div>
</body></html>
